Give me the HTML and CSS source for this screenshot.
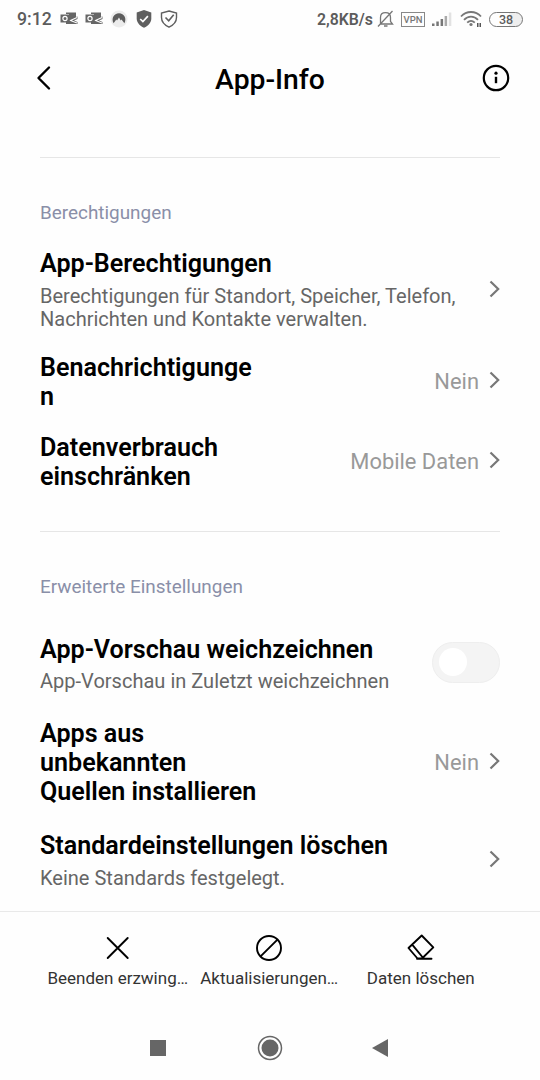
FILE: index.html
```html
<!DOCTYPE html>
<html lang="de">
<head>
    <meta charset="UTF-8">
    <meta name="viewport" content="width=device-width, initial-scale=1.0">
    <title>App-Info</title>
    <link rel="stylesheet" href="styles.css">
</head>
<body>
    <div class="status-bar">
        <span class="time">9:12</span>
        <svg class="outlook" width="18" height="16" viewBox="0 0 18 16">
            <path d="M6 1.500h10v5.500L9 9V3H6z" fill="#666"/>
            <path d="M9 8l8.500-2.500v2.500L14 9.500l3.500 1.500v2H6v-2h3z" fill="#666"/>
            <path d="M17 6.500L10.500 9.500l6.500 2.500" fill="none" stroke="#fefefe" stroke-width="1.100"/>
            <rect x=".5" y="3.500" width="9" height="8" fill="#666"/>
            <circle cx="5" cy="7.500" r="2.100" fill="none" stroke="#fff" stroke-width="1.200"/>
        </svg>
        <svg class="outlook" width="18" height="16" viewBox="0 0 18 16">
            <path d="M6 1.500h10v5.500L9 9V3H6z" fill="#666"/>
            <path d="M9 8l8.500-2.500v2.500L14 9.500l3.500 1.500v2H6v-2h3z" fill="#666"/>
            <path d="M17 6.500L10.500 9.500l6.500 2.500" fill="none" stroke="#fefefe" stroke-width="1.100"/>
            <rect x=".5" y="3.500" width="9" height="8" fill="#666"/>
            <circle cx="5" cy="7.500" r="2.100" fill="none" stroke="#fff" stroke-width="1.200"/>
        </svg>
        <svg class="nord" width="18" height="18" viewBox="0 0 18 18">
            <circle cx="9" cy="9" r="8.500" fill="#ececec"/>
            <path d="M3.600 13.300C1 8.800 3.800 3.300 9 3.300s8 5.500 5.400 10L11.500 9.500l-.8 1L9 7.500l-2 3-.7-1z" fill="#5c5c5c"/>
        </svg>
        <svg class="shield" width="16" height="18" viewBox="0 0 16 18">
            <path d="M8 0l7.300 2.500v6c0 4-2.700 7-7.300 9.300C3.400 15.500.7 12.500.7 8.500v-6z" fill="#5f5f5f"/>
            <path d="M4.200 9l2.700 2.600 5-5.400" fill="none" stroke="#fff" stroke-width="1.700"/>
        </svg>
        <svg class="shield-outline" width="18" height="18" viewBox="0 0 18 18">
            <path d="M9 1l7.500 2v4.500c0 4-3 7.500-7.500 9.700-4.500-2.200-7.500-5.700-7.500-9.700V3z" fill="none" stroke="#5f5f5f" stroke-width="1.400"/>
            <path d="M5.500 7.500l3.200 3.300 5-6" fill="none" stroke="#5f5f5f" stroke-width="1.600"/>
        </svg>
        <span class="speed">2,8KB/s</span>
        <svg class="bell" width="18" height="18" viewBox="0 0 18 18" fill="none" stroke="#777" stroke-width="1.300">
            <path d="M3.500 13.500V7.500C3.500 4.500 5.500 2.700 8.500 2.700s5 1.800 5 4.800v4l2 2.500H3M7 16h3.500M1 16.500L15.500 1"/>
        </svg>
        <span class="vpn">VPN</span>
        <svg class="signal" width="20" height="16" viewBox="0 0 20 16">
            <path d="M0 12.500h2.500V15H0zM4.300 10.500h2.500V15H4.300zM8.600 8h2.500v7H8.600z" fill="#777"/>
            <path d="M12.600 5h2.500v10h-2.500z" fill="#aaa"/>
            <path d="M16.800 1.500h2.500V15h-2.500z" fill="#e2e2e2"/>
        </svg>
        <svg class="wifi" width="23" height="18" viewBox="0 0 23 18">
            <g fill="none" stroke="#777" stroke-width="1.800">
                <path d="M1 6.500C6.500.5 15.500.5 21 6.500M4 9.800c4-4.300 10-4.300 14 0M7.200 12.700c2.300-2.200 5.300-2.200 7.600 0"/>
            </g>
            <circle cx="11" cy="14.500" r="1.600" fill="#777"/>
            <path d="M17 13h1.500v4H17zM19.500 13H21v4h-1.500z" fill="#555"/>
        </svg>
        <span class="battery">38</span>
    </div>

    <header class="title-bar">
        <svg width="16" height="26" viewBox="0 0 16 26">
            <path d="M14 2.500L3.500 13 14 23.500" fill="none" stroke="#000" stroke-width="2.400" stroke-linecap="round" stroke-linejoin="round"/>
        </svg>
        <h1>App-Info</h1>
        <svg width="28" height="28" viewBox="0 0 28 28">
            <circle cx="14" cy="14" r="12.200" fill="none" stroke="#000" stroke-width="2.200"/>
            <circle cx="14" cy="9.200" r="1.600"/>
            <path d="M14 12.800v6.400" stroke="#000" stroke-width="2.400"/>
        </svg>
    </header>

    <main>
        <section class="permissions">
            <h2>Berechtigungen</h2>
            <div class="row">
                <div class="text">
                    <h3>App-Berechtigungen</h3>
                    <p>Berechtigungen für Standort, Speicher, Telefon, Nachrichten und Kontakte verwalten.</p>
                </div>
                <svg class="chevron" viewBox="0 0 11 18"><path d="M1.500 1.500L9.200 9l-7.700 7.500"/></svg>
            </div>
            <div class="row">
                <h3 class="narrow">Benachrichtigungen</h3>
                <span class="value">Nein</span>
                <svg class="chevron" viewBox="0 0 11 18"><path d="M1.500 1.500L9.200 9l-7.700 7.500"/></svg>
            </div>
            <div class="row">
                <h3 class="narrow">Datenverbrauch einschränken</h3>
                <span class="value">Mobile Daten</span>
                <svg class="chevron" viewBox="0 0 11 18"><path d="M1.500 1.500L9.200 9l-7.700 7.500"/></svg>
            </div>
        </section>

        <section class="advanced">
            <h2>Erweiterte Einstellungen</h2>
            <div class="row">
                <div class="text">
                    <h3>App-Vorschau weichzeichnen</h3>
                    <p>App-Vorschau in Zuletzt weichzeichnen</p>
                </div>
                <div class="toggle"><div class="knob"></div></div>
            </div>
            <div class="row">
                <h3 class="narrow">Apps aus unbekannten Quellen installieren</h3>
                <span class="value">Nein</span>
                <svg class="chevron" viewBox="0 0 11 18"><path d="M1.500 1.500L9.200 9l-7.700 7.500"/></svg>
            </div>
            <div class="row">
                <div class="text">
                    <h3>Standardeinstellungen löschen</h3>
                    <p>Keine Standards festgelegt.</p>
                </div>
                <svg class="chevron" viewBox="0 0 11 18"><path d="M1.500 1.500L9.200 9l-7.700 7.500"/></svg>
            </div>
        </section>
    </main>

    <footer class="actions">
        <div class="action">
            <svg width="28" height="28" viewBox="0 0 28 28"><path d="M3.700 4l20 20M23.700 4L3.700 24"/></svg>
            <span>Beenden erzwing…</span>
        </div>
        <div class="action">
            <svg width="28" height="28" viewBox="0 0 28 28"><circle cx="14" cy="14" r="12"/><path d="M5.800 22.200L22.200 5.800"/></svg>
            <span>Aktualisierungen…</span>
        </div>
        <div class="action">
            <svg width="28" height="28" viewBox="0 0 28 28"><path d="M14.700 1.500L26.300 13.300 15 24.500h-4.500L1.500 14zM5.200 10.600L15.800 23.500M10 24.800h14.500"/></svg>
            <span>Daten löschen</span>
        </div>
    </footer>

    <nav class="nav-bar">
        <svg width="16" height="16" viewBox="0 0 16 16"><rect width="16" height="16" fill="#666"/></svg>
        <svg width="26" height="26" viewBox="0 0 26 26">
            <circle cx="13" cy="13" r="11.500" fill="none" stroke="#666" stroke-width="1.500"/>
            <circle cx="13" cy="13" r="8.500" fill="#666"/>
        </svg>
        <svg width="16" height="18" viewBox="0 0 16 18"><path d="M0 9L16 0v18z" fill="#666"/></svg>
    </nav>
</body>
</html>
```

FILE: styles.css
```css
* {
    box-sizing: border-box;
}

body {
    margin: 0;
    width: 540px;
    height: 1080px;
    overflow: hidden;
    background-color: #fefefe;
    font-family: Roboto, sans-serif;
    color: #000;
    display: flex;
    flex-direction: column;
}

h1, h2, h3, p {
    margin: 0;
}

svg {
    display: block;
    flex-shrink: 0;
}

/* Status bar */
.status-bar {
    height: 38px;
    padding: 0 17px;
    display: flex;
    align-items: center;
    color: #5c5c5c;
}

.time {
    width: 43px;
    font-size: 17.7px;
    font-weight: 500;
}

.outlook {
    margin-right: 7px;
}

.nord {
    margin-right: 8px;
}

.shield {
    margin-right: 8px;
}

.speed {
    margin-left: auto;
    width: 60px;
    font-size: 15.8px;
    font-weight: 600;
    white-space: nowrap;
}

.vpn {
    width: 24px;
    height: 15px;
    margin: 0 7px 0 6px;
    border: 1px solid #888;
    font-size: 9.5px;
    font-weight: 500;
    line-height: 13px;
    text-align: center;
    color: #777;
}

.wifi {
    margin: 0 6px 0 8px;
}

.battery {
    width: 34px;
    height: 15px;
    border: 1px solid #777;
    border-radius: 8px;
    background: linear-gradient(to right, #fefefe 60%, #eee 60%);
    font-size: 12.5px;
    font-weight: 500;
    line-height: 14px;
    text-align: center;
}

/* Title */
.title-bar {
    height: 80px;
    padding: 0 30px 0 35px;
    display: flex;
    align-items: center;
    justify-content: space-between;
}

.title-bar h1 {
    padding-top: 3px;
    margin-left: 7px;
    font-size: 28.3px;
    font-weight: 500;
}

main {
    height: 793px;
    padding: 39px 40px 0;
}

section {
    border-top: 1px solid #e6e6e6;
    padding-top: 43px;
}

section h2 {
    font-size: 18.9px;
    font-weight: 400;
    line-height: 24px;
    color: #8a8fa8;
}

.row {
    display: flex;
    align-items: center;
}

.permissions {
    height: 374px;
}

.permissions .row {
    padding: 11px 0;
}

.permissions .row:nth-child(2) {
    padding-bottom: 10px;
}

.permissions h2 {
    margin-bottom: 13px;
}

.advanced h2 {
    margin-bottom: 23px;
}

.advanced .row {
    padding: 12.7px 0;
}

h3 {
    font-size: 25.1px;
    font-weight: 600;
    line-height: 29px;
}

.narrow {
    width: 220px;
    overflow-wrap: anywhere;
}

.text {
    flex: 1;
}

.text p {
    margin-top: 6.5px;
    max-width: 430px;
    font-size: 20.05px;
    line-height: 23.5px;
    color: #666;
}

.value {
    margin-left: auto;
    font-size: 21.9px;
    color: #999;
}

.chevron {
    width: 11px;
    height: 18px;
    margin: 0 0 3px 10px;
}

.chevron path {
    fill: none;
    stroke: #777;
    stroke-width: 2.2;
}

.toggle {
    width: 68px;
    height: 41px;
    margin-bottom: 3px;
    padding: 5px 6px;
    border: 1px solid #eee;
    border-radius: 21px;
    background-color: #f4f4f4;
}

.knob {
    width: 28px;
    height: 28px;
    border-radius: 50%;
    background-color: #fff;
}

/* Bottom actions */
.actions {
    height: 104px;
    padding: 22px 42px 0;
    border-top: 1px solid #e9e9e9;
    display: grid;
    grid-template-columns: repeat(3, 151.5px);
}

.action {
    display: flex;
    flex-direction: column;
    align-items: center;
    gap: 6px;
    font-size: 17px;
    line-height: 21px;
    color: #333;
}

.action svg {
    fill: none;
    stroke: #000;
    stroke-width: 1.9;
    stroke-linecap: round;
    stroke-linejoin: round;
}

.nav-bar {
    height: 65px;
    padding: 0 152px 0 150px;
    display: flex;
    align-items: center;
    justify-content: space-between;
}

.nav-bar svg:nth-child(2) {
    margin-left: 2px;
}
```
